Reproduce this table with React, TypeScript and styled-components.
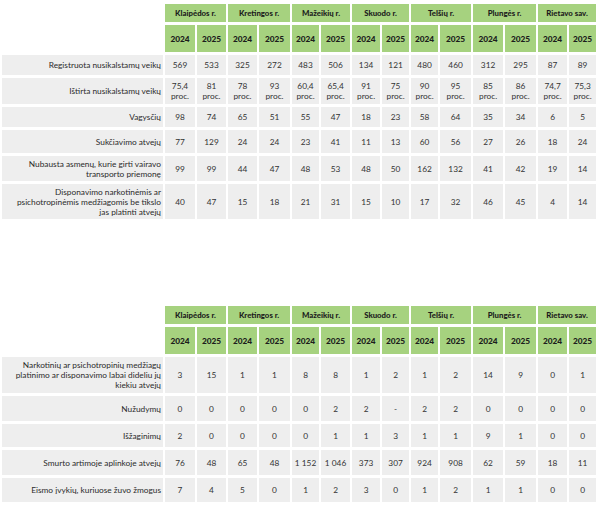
import React from 'react'
import styled, { createGlobalStyle } from 'styled-components'

const GlobalStyle = createGlobalStyle`
  html, body {
    margin: 0;
    padding: 0;
    background: #fff;
  }
  body {
    font-family: Lato, "Open Sans", "Liberation Sans", sans-serif;
    color: #333;
  }
`

const REGIONS = ['Klaipėdos r.', 'Kretingos r.', 'Mažeikių r.', 'Skuodo r.', 'Telšių r.', 'Plungės r.', 'Rietavo sav.']
const COL_WIDTHS = [30, 29, 29, 31, 27, 29, 28, 27, 27, 31, 30, 31, 29, 27]
const LABEL_WIDTH = 161

type Row = { label: string; values: string[]; h: number }

const P = (v: string) => `${v}\nproc.`

const crimeRows: Row[] = [
  { label: 'Registruota nusikalstamų veikų', h: 20, values: ['569', '533', '325', '272', '483', '506', '134', '121', '480', '460', '312', '295', '87', '89'] },
  { label: 'Ištirta nusikalstamų veikų', h: 26, values: ['75,4', '81', '78', '93', '60,4', '65,4', '91', '75', '90', '95', '85', '86', '74,7', '75,3'].map(P) },
  { label: 'Vagysčių', h: 20, values: ['98', '74', '65', '51', '55', '47', '18', '23', '58', '64', '35', '34', '6', '5'] },
  { label: 'Sukčiavimo atvejų', h: 23, values: ['77', '129', '24', '24', '23', '41', '11', '13', '60', '56', '27', '26', '18', '24'] },
  { label: 'Nubausta asmenų, kurie girti vairavo\ntransporto priemonę', h: 25, values: ['99', '99', '44', '47', '48', '53', '48', '50', '162', '132', '41', '42', '19', '14'] },
  { label: 'Disponavimo narkotinėmis ar\npsichotropinėmis medžiagomis be tikslo\njas platinti atvejų', h: 35, values: ['40', '47', '15', '18', '21', '31', '15', '10', '17', '32', '46', '45', '4', '14'] },
]

const severeRows: Row[] = [
  { label: 'Narkotinių ar psichotropinių medžiagų\nplatinimo ar disponavimo labai dideliu jų\nkiekiu atvejų', h: 36, values: ['3', '15', '1', '1', '8', '8', '1', '2', '1', '2', '14', '9', '0', '1'] },
  { label: 'Nužudymų', h: 25, values: ['0', '0', '0', '0', '0', '2', '2', '-', '2', '2', '0', '0', '0', '0'] },
  { label: 'Išžaginimų', h: 23, values: ['2', '0', '0', '0', '0', '1', '1', '3', '1', '1', '9', '1', '0', '0'] },
  { label: 'Smurto artimoje aplinkoje atvejų', h: 25, values: ['76', '48', '65', '48', '1 152', '1 046', '373', '307', '924', '908', '62', '59', '18', '11'] },
  { label: 'Eismo įvykių, kuriuose žuvo žmogus', h: 24, values: ['7', '4', '5', '0', '1', '2', '3', '0', '1', '2', '1', '1', '0', '0'] },
]

const Page = styled.div`
  display: flex;
  flex-direction: column;
  gap: 81px;
  padding-top: 1px;
`

const Table = styled.table`
  table-layout: fixed;
  border-collapse: separate;
  border-spacing: 2px 3px;
  width: ${LABEL_WIDTH + COL_WIDTHS.reduce((a, b) => a + b, 0) + 32}px;
  font-size: 8.3px;
  line-height: 10px;
`

const Col = styled.col<{ $w: number }>`
  width: ${p => p.$w}px;
`

const HeadRow = styled.tr<{ $h: number }>`
  height: ${p => p.$h}px;
`

const RegionCell = styled.th`
  background: #a6d27f;
  color: #1c1c1c;
  font-weight: 900;
  font-size: 7.8px;
  text-align: center;
  vertical-align: middle;
  padding: 0;
  white-space: nowrap;
`

const YearCell = styled.th`
  background: #a6d27f;
  color: #1c1c1c;
  font-weight: 900;
  font-size: 8.3px;
  text-align: center;
  vertical-align: middle;
  padding: 0;
`

const BlankCell = styled.th`
  background: transparent;
  padding: 0;
`

const BodyRow = styled.tr<{ $h: number }>`
  height: ${p => p.$h}px;
`

const LabelCell = styled.td`
  background: #eeeeee;
  color: #2b2b2b;
  text-align: right;
  vertical-align: middle;
  padding: 0 2px 0 1px;
  white-space: pre-line;
`

const ValueCell = styled.td`
  background: #eeeeee;
  color: #333;
  text-align: center;
  vertical-align: middle;
  padding: 0;
  white-space: pre-line;
`

const StatTable = ({ rows }: { rows: Row[] }) => (
  <Table>
    <colgroup>
      <Col $w={LABEL_WIDTH} />
      {COL_WIDTHS.map((w, i) => (
        <Col key={i} $w={w} />
      ))}
    </colgroup>
    <thead>
      <HeadRow $h={18}>
        <BlankCell rowSpan={2} />
        {REGIONS.map(r => (
          <RegionCell key={r} colSpan={2}>{r}</RegionCell>
        ))}
      </HeadRow>
      <HeadRow $h={27}>
        {REGIONS.map(r => (
          <React.Fragment key={r}>
            <YearCell>2024</YearCell>
            <YearCell>2025</YearCell>
          </React.Fragment>
        ))}
      </HeadRow>
    </thead>
    <tbody>
      {rows.map(row => (
        <BodyRow key={row.label} $h={row.h}>
          <LabelCell>{row.label}</LabelCell>
          {row.values.map((v, i) => (
            <ValueCell key={i}>{v}</ValueCell>
          ))}
        </BodyRow>
      ))}
    </tbody>
  </Table>
)

export default function App() {
  return (
    <>
      <GlobalStyle />
      <Page>
        <StatTable rows={crimeRows} />
        <StatTable rows={severeRows} />
      </Page>
    </>
  )
}
